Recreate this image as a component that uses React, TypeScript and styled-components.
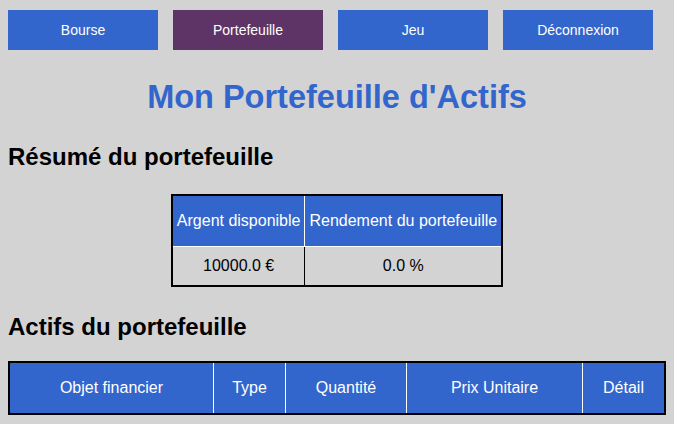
import styled, { createGlobalStyle } from 'styled-components';

const GlobalStyle = createGlobalStyle`
	body {
		margin: 8px;
		background-color: #d3d3d3;
		font-family: 'Liberation Sans', Arial, sans-serif;
		font-size: 16px;
	}
`;

const links = ['Bourse', 'Portefeuille', 'Jeu', 'Déconnexion'];
const columns = [
	{ label: 'Objet financier', width: '195px' },
	{ label: 'Type', width: '63px' },
	{ label: 'Quantité', width: '112px' },
	{ label: 'Prix Unitaire', width: '167px' },
	{ label: 'Détail', width: 'auto' },
];

export default function App() {
	return (
		<>
			<GlobalStyle />
			<Nav>
				{links.map((label) => (
					<NavButton key={label} $active={label === 'Portefeuille'}>
						{label}
					</NavButton>
				))}
			</Nav>
			<Title>Mon Portefeuille d'Actifs</Title>
			<SectionTitle $after={23}>Résumé du portefeuille</SectionTitle>
			<SummaryTable>
				<thead>
					<tr>
						<Th>Argent disponible</Th>
						<Th>Rendement du portefeuille</Th>
					</tr>
				</thead>
				<tbody>
					<tr>
						<Td>10000.0 €</Td>
						<Td>0.0 %</Td>
					</tr>
				</tbody>
			</SummaryTable>
			<SectionTitle $after={20}>Actifs du portefeuille</SectionTitle>
			<AssetsTable>
				<thead>
					<tr>
						{columns.map((col) => (
							<Th key={col.label} $width={col.width}>
								{col.label}
							</Th>
						))}
					</tr>
				</thead>
			</AssetsTable>
		</>
	);
}

const Nav = styled.nav`
	display: flex;
	flex-direction: row;
	gap: 15px;
	padding-top: 2px;
`;

const NavButton = styled.button<{ $active?: boolean }>`
	width: 150px;
	height: 40px;
	border: none;
	padding: 0;
	background-color: ${(p) => (p.$active ? '#5e3366' : '#3366cc')};
	color: #ffffff;
	font-family: 'Liberation Sans', Arial, sans-serif;
	font-size: 14px;
	cursor: pointer;
`;

const Title = styled.h1`
	margin: 29px 0 27px;
	text-align: center;
	color: #3366cc;
	font-size: 32.5px;
	font-weight: 700;
`;

const SectionTitle = styled.h2<{ $after: number }>`
	margin: 20px 0 ${(p) => p.$after}px;
	font-size: 24px;
	font-weight: 700;
	color: #000000;
`;

const SummaryTable = styled.table`
	margin: 0 auto 26px;
	border-collapse: collapse;
	border: 2px solid #000000;
`;

const AssetsTable = styled.table`
	width: 100%;
	border-collapse: collapse;
	border: 2px solid #000000;
`;

const Th = styled.th<{ $width?: string }>`
	width: ${(p) => p.$width ?? 'auto'};
	padding: 16px 4px;
	background-color: #3366cc;
	color: #ffffff;
	font-weight: 400;
	border: 1px solid #ffffff;
`;

const Td = styled.td`
	padding: 10px 4px;
	text-align: center;
	border: 1px solid #000000;
`;
